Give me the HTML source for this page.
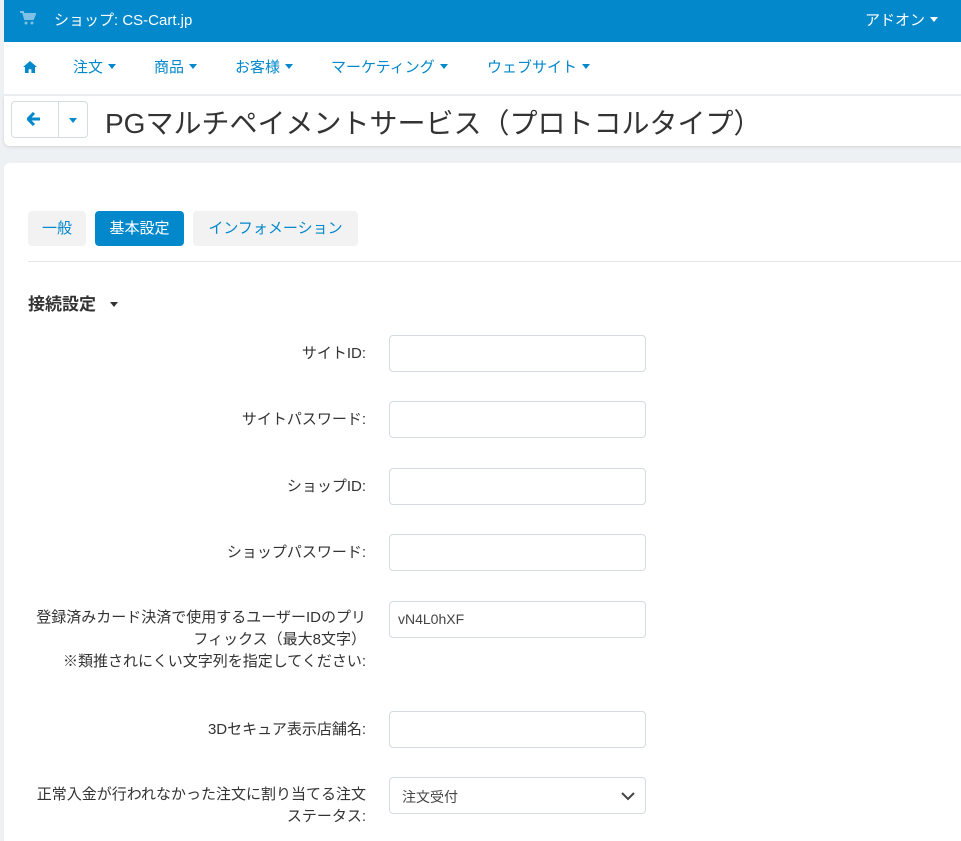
<!DOCTYPE html>
<html><head><meta charset="utf-8"><style>
*{box-sizing:border-box;margin:0;padding:0}
body{width:961px;height:841px;overflow:hidden;background:#eef1f3;font-family:"Liberation Sans","Noto Sans CJK JP",sans-serif;position:relative}
.a{position:absolute}
.top{left:4px;top:0;right:0;height:42px;background:#0388cc;color:#fff}
.nav{left:4px;top:42px;right:0;height:53px;background:#fff;border-bottom:1px solid #eceff1}
.nav>span{position:absolute;top:14px;font-size:15px;color:#0388cc}
.car{display:inline-block;width:0;height:0;border-left:4px solid transparent;border-right:4px solid transparent;border-top:5px solid currentColor;vertical-align:3px;margin-left:5px}
.tb{left:4px;top:96px;right:0;height:50px;background:#fff;border-radius:0 0 0 6px;box-shadow:0 1px 3px rgba(0,0,0,.12)}
.main{left:4px;top:163px;right:0;bottom:0;background:#fff;border-radius:6px 0 0 0}
.tab{position:absolute;top:211px;height:35px;border-radius:4px;font-size:15px;line-height:35px;text-align:center;background:#f2f2f2;color:#0388cc}
.lbl{position:absolute;left:10px;width:356px;text-align:right;font-size:15px;line-height:22px;color:#333;white-space:nowrap}
.inp{position:absolute;left:389px;width:257px;height:37px;border:1px solid #d5dbe1;border-radius:4px;background:#fff;font-size:14px;color:#444;padding:9px 8px}
</style></head><body>
<div class="a top">
<svg class="a" style="left:16px;top:11px" width="16" height="14" viewBox="0 0 16 14"><path d="M0 1h3l2 7h8l2-5H4" fill="none" stroke="#7fc1e6" stroke-width="2"/><rect x="4" y="3" width="10" height="5" fill="#7fc1e6"/><circle cx="6" cy="12" r="1.5" fill="#7fc1e6"/><circle cx="12" cy="12" r="1.5" fill="#7fc1e6"/></svg>
<span class="a" style="left:50px;top:9px;font-size:15px">ショップ: CS-Cart.jp</span>
<span class="a" style="left:861px;top:9px;font-size:15px">アドオン<span class="car"></span></span>
</div>
<div class="a nav">
<svg class="a" style="left:19px;top:19px" width="14" height="12" viewBox="0 0 15 13"><path d="M7.5 0L0 6.5h2V13h4V9h3v4h4V6.5h2z" fill="#0388cc"/></svg>
<span style="left:69px">注文<span class="car"></span></span>
<span style="left:150px">商品<span class="car"></span></span>
<span style="left:231px">お客様<span class="car"></span></span>
<span style="left:327px">マーケティング<span class="car"></span></span>
<span style="left:483px">ウェブサイト<span class="car"></span></span>
</div>
<div class="a tb">
<div class="a" style="left:7px;top:5px;width:77px;height:37px;border:1px solid #d5dbe1;border-radius:4px"></div>
<div class="a" style="left:54px;top:5px;width:1px;height:37px;background:#d5dbe1"></div>
<svg class="a" style="left:23px;top:16px" width="14" height="14" viewBox="0 0 14 14"><path d="M7 1L1 7l6 6M1.5 7H13" fill="none" stroke="#0388cc" stroke-width="3"/></svg>
<span class="a" style="left:65px;top:22px;color:#0388cc;font-size:0"><span class="car" style="margin:0;vertical-align:0"></span></span>
<span class="a" style="left:101px;top:6px;font-size:28px;color:#333">PGマルチペイメントサービス（プロトコルタイプ）</span>
</div>
<div class="a main"></div>
<div class="tab" style="left:28px;width:58px">一般</div>
<div class="tab" style="left:95px;width:89px;background:#0388cc;color:#fff">基本設定</div>
<div class="tab" style="left:193px;width:165px">インフォメーション</div>
<div class="a" style="left:28px;right:0;top:261px;height:1px;background:#e3e6ea"></div>
<div class="a" style="left:28px;top:290px;font-size:17px;font-weight:bold;color:#333">接続設定<span class="car" style="margin-left:14px;color:#333"></span></div>

<div class="lbl" style="top:343px">サイトID:</div><div class="inp" style="top:335px"></div>
<div class="lbl" style="top:409px">サイトパスワード:</div><div class="inp" style="top:401px"></div>
<div class="lbl" style="top:476px">ショップID:</div><div class="inp" style="top:468px"></div>
<div class="lbl" style="top:542px">ショップパスワード:</div><div class="inp" style="top:534px"></div>
<div class="lbl" style="top:607px">登録済みカード決済で使用するユーザーIDのプリ<br>フィックス（最大8文字）<br>※類推されにくい文字列を指定してください:</div><div class="inp" style="top:601px">vN4L0hXF</div>
<div class="lbl" style="top:719px">3Dセキュア表示店舗名:</div><div class="inp" style="top:711px"></div>
<div class="lbl" style="top:784px">正常入金が行われなかった注文に割り当てる注文<br>ステータス:</div><div class="inp" style="top:777px;padding-left:12px">注文受付<svg class="a" style="right:10px;top:14px" width="14" height="9" viewBox="0 0 14 9"><path d="M1 1l6 6 6-6" fill="none" stroke="#444" stroke-width="2"/></svg></div>
</body></html>
